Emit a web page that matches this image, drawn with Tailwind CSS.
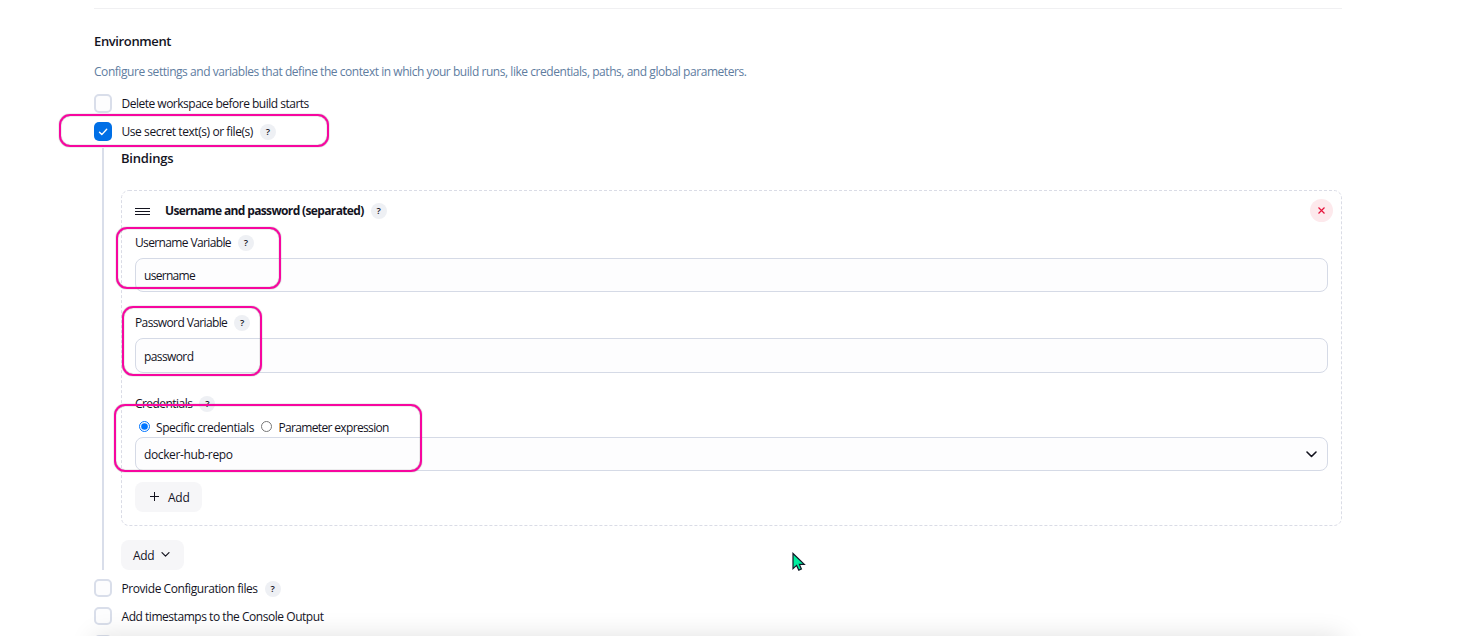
<!DOCTYPE html>
<html lang="en">
<head>
<meta charset="utf-8">
<title>Environment</title>
<script src="https://cdn.jsdelivr.net/npm/@tailwindcss/browser@4"></script>
</head>
<body class="bg-white font-['Open_Sans','Noto_Sans',sans-serif] text-[12px] leading-4 text-[#14141f]">
<div class="relative h-[639px] w-[1479px] overflow-hidden">
<main class="h-[636px] overflow-hidden pl-[94px] pr-[137px] pt-2">
  <hr class="h-px border-0 bg-[#f0f0f2]">
  <h2 class="mt-6 h-4 text-[13px] font-semibold"><span class="tracking-[-0.37px]">Environment</span></h2>
  <p class="mt-[15px] h-4 text-[#607d9f]"><span class="tracking-[-0.45px]">Configure settings and variables that define the context in which your build runs, like credentials, paths, and global parameters.</span></p>
  <div class="mt-[14px] flex h-[19px] items-center">
    <span class="h-[19px] w-[18px] rounded-[5px] border-2 border-[#d9deea] bg-[#fdfdfe]"></span>
    <span class="ml-[9.5px] pt-px tracking-[-0.5px]">Delete workspace before build starts</span>
  </div>
  <div class="mt-[9px] flex h-[19px] items-center">
    <span class="flex h-[19px] w-[18px] items-center justify-center rounded-[5px] bg-[#006fe6]"><svg class="h-[10px] w-[10px]" viewBox="0 0 10 10" fill="none" stroke="#fff" stroke-width="1.4" stroke-linecap="round" stroke-linejoin="round"><path d="M1.5 5.3 3.8 7.6 8.7 2.2"/></svg></span>
    <span class="ml-[9.5px] pt-px tracking-[-0.43px]">Use secret text(s) or file(s)</span>
    <span class="ml-[7px] flex h-4 w-4 items-center justify-center rounded-full bg-[#eef0f4] text-[9.5px] font-semibold">?</span>
  </div>
  <section class="ml-2 mt-[7px] h-[422px] border-l-2 border-[#d9deea] pl-[17px] pt-[2px]">
    <h3 class="h-4 text-[13px] font-semibold"><span class="tracking-[-0.2px]">Bindings</span></h3>
    <div class="relative mt-[24px] h-[336px] w-[1221px] px-[14px] pt-[9px]">
      <svg class="absolute inset-0 h-full w-full" fill="none"><rect x=".5" y=".5" width="1220" height="335" rx="7.5" stroke="#dadce6" stroke-dasharray="3 2"/></svg>
      <div class="flex h-[23px] items-center">
        <svg class="mt-px h-[9px] w-[15px]" viewBox="0 0 15 9" fill="#14141f"><path d="M0 1h15v1H0zM0 4h15v1H0zM0 7h15v1H0z"/></svg>
        <span class="ml-[15px] font-bold tracking-[-0.64px]">Username and password (separated)</span>
        <span class="ml-[7px] flex h-4 w-4 items-center justify-center rounded-full bg-[#eef0f4] text-[9.5px] font-semibold">?</span>
        <span class="-mr-[5px] ml-auto flex h-[23px] w-[23px] items-center justify-center rounded-full bg-[#fde9ec]"><svg class="h-[7px] w-[7px]" viewBox="0 0 7 7" fill="none" stroke="#e6143c" stroke-width="1.2"><path d="m.5.5 6 6m0-6-6 6"/></svg></span>
      </div>
      <div class="mt-[13px] flex h-4 items-center">
        <span class="tracking-[-0.63px]">Username Variable</span>
        <span class="ml-[7px] flex h-4 w-4 items-center justify-center rounded-full bg-[#eef0f4] text-[9.5px] font-semibold">?</span>
      </div>
      <div class="mt-[7px] flex h-[34px] items-center rounded-lg border border-[#d5dae6] bg-[#fdfdfe] pl-2 pt-px"><span class="tracking-[-0.7px]">username</span></div>
      <div class="mt-[23px] flex h-4 items-center">
        <span class="tracking-[-0.62px]">Password Variable</span>
        <span class="ml-[7px] flex h-4 w-4 items-center justify-center rounded-full bg-[#eef0f4] text-[9.5px] font-semibold">?</span>
      </div>
      <div class="mt-[7px] flex h-[35px] items-center rounded-lg border border-[#d5dae6] bg-[#fdfdfe] pl-2 pt-[3px]"><span class="tracking-[-0.6px]">password</span></div>
      <div class="mt-[23px] flex h-4 items-center">
        <span class="tracking-[-0.55px]">Credentials</span>
        <span class="ml-[7px] flex h-4 w-4 items-center justify-center rounded-full bg-[#eef0f4] text-[9.5px] font-semibold">?</span>
      </div>
      <div class="mt-2 flex h-4 items-center pl-1">
        <svg class="mb-[4px] h-[11px] w-[11px]" viewBox="0 0 11 11"><circle cx="5.5" cy="5.5" r="5" fill="#fff" stroke="#0075ff"/><circle cx="5.5" cy="5.5" r="3.3" fill="#0075ff"/></svg>
        <span class="ml-[6px] tracking-[-0.45px]">Specific credentials</span>
        <svg class="mb-[4px] ml-[7.5px] h-[11px] w-[11px]" viewBox="0 0 11 11"><circle cx="5.5" cy="5.5" r="5" fill="#fff" stroke="#767676"/></svg>
        <span class="ml-[6px] tracking-[-0.65px]">Parameter expression</span>
      </div>
      <div class="mt-px flex h-[34px] items-center justify-between rounded-lg border border-[#d5dae6] bg-[#fdfdfe] pl-2 pr-[10px]">
        <span class="pt-px tracking-[-0.38px]">docker-hub-repo</span>
        <svg class="h-[7px] w-[11px]" viewBox="0 0 11 7" fill="none" stroke="#14141f" stroke-width="1.6" stroke-linecap="round" stroke-linejoin="round"><path d="m1 1 4.5 4.5L10 1"/></svg>
      </div>
      <button class="relative mt-[11px] flex h-[30px] w-[67px] items-center rounded-lg bg-[#f6f6f8] pl-[15px]">
        <svg class="mb-px h-[9px] w-[9px]" viewBox="0 0 9 9" stroke="#14141f"><path d="M4.5 0v9M0 4.5h9"/></svg>
        <span class="ml-[9px] pt-px tracking-[-0.25px]">Add</span>
      </button>
    </div>
    <button class="mt-[14px] flex h-[30px] w-[63px] items-center rounded-lg bg-[#f6f6f8] pl-3">
      <span class="pt-px tracking-[-0.4px]">Add</span>
      <svg class="mb-px ml-[7px] h-[5px] w-[9px]" viewBox="0 0 9 5" fill="none" stroke="#14141f" stroke-width="1.2" stroke-linecap="round" stroke-linejoin="round"><path d="m1 .6 3.5 3.5L8 .6"/></svg>
    </button>
  </section>
  <div class="mt-[9px] flex h-[18px] items-center">
    <span class="h-[18px] w-[18px] rounded-[5px] border-2 border-[#d9deea] bg-[#fdfdfe]"></span>
    <span class="ml-[9.5px] pt-[2px] tracking-[-0.43px]">Provide Configuration files</span>
    <span class="ml-[7px] mt-px flex h-4 w-4 items-center justify-center rounded-full bg-[#eef0f4] text-[9.5px] font-semibold">?</span>
  </div>
  <div class="mt-[10px] flex h-[18px] items-center">
    <span class="h-[18px] w-[18px] rounded-[5px] border-2 border-[#d9deea] bg-[#fdfdfe]"></span>
    <span class="ml-[9.5px] pt-[2px] tracking-[-0.46px]">Add timestamps to the Console Output</span>
  </div>
  <div class="mt-[10px] flex h-[18px] items-center"><span class="h-[18px] w-[18px] rounded-[5px] border-2 border-[#d9deea] bg-[#fdfdfe]"></span></div>
</main>

<!-- Shadow above the sticky footer -->
<div class="pointer-events-none absolute inset-x-0 top-[590px] h-[46px] overflow-hidden"><div class="absolute left-[94px] top-[46px] h-10 w-[1248px] shadow-[0_0_26px_rgba(0,0,0,0.12)]"></div></div>

<!-- Highlight outlines -->
<div class="absolute left-[59px] top-[114px] h-[33px] w-[270px] rounded-[11px] border-2 border-[#f7069f] shadow-[0_0_1px_#555,inset_0_0_1px_#555]"></div>
<div class="absolute left-[116px] top-[227px] h-[62px] w-[165px] rounded-[11px] border-2 border-[#f7069f] shadow-[0_0_1px_#555,inset_0_0_1px_#555]"></div>
<div class="absolute left-[122px] top-[306px] h-[70px] w-[140px] rounded-[11px] border-2 border-[#f7069f] shadow-[0_0_1px_#555,inset_0_0_1px_#555]"></div>
<div class="absolute left-[114px] top-[404px] h-[68px] w-[308px] rounded-[11px] border-2 border-[#f7069f] shadow-[0_0_1px_#555,inset_0_0_1px_#555]"></div>

<svg class="absolute left-[792px] top-[552px] h-[20px] w-[15px]" viewBox="0 0 15 20" fill="#00ef9f" stroke="#111827" stroke-width="1.2"><path d="M1 1.5v15.2l3.6-3.3 2.2 4.7 2.6-1.1-2-4.6h4.9z"/></svg>
</div>
</body>
</html>
